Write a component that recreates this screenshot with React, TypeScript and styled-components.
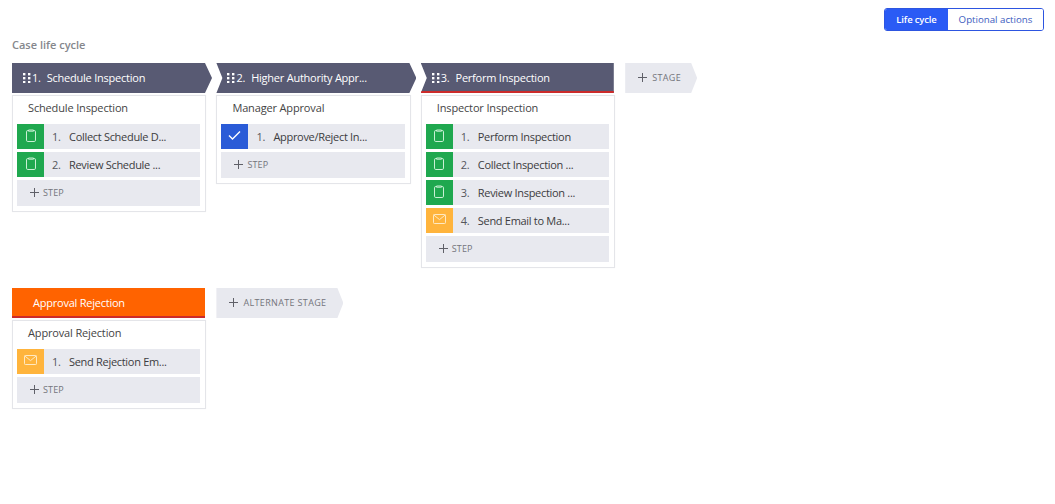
import React from "react";
import styled, { createGlobalStyle } from "styled-components";

const Global = createGlobalStyle`
  html, body { margin: 0; padding: 0; background: #fff; }
  body { font-family: "Open Sans", "Liberation Sans", sans-serif; color: #333; }
`;

const Page = styled.div`
  width: 1055px;
  height: 504px;
  box-sizing: border-box;
  padding: 8px 11px 0 12px;
  overflow: hidden;
`;
const TopBar = styled.div`
  display: flex;
  justify-content: flex-end;
  height: 23px;
`;
const Toggle = styled.div`
  display: flex;
  width: 160px;
  height: 23px;
  box-sizing: border-box;
  border: 1px solid #2d55e0;
  border-radius: 3px;
  overflow: hidden;
`;
const ToggleOption = styled.div<{ $active?: boolean }>`
  display: flex;
  align-items: center;
  justify-content: center;
  flex: ${(p) => (p.$active ? "0 0 63px" : "1")};
  font-size: ${(p) => (p.$active ? "9.5px" : "9.7px")};
  letter-spacing: ${(p) => (p.$active ? "-0.15px" : "0")};
  font-weight: ${(p) => (p.$active ? 600 : 400)};
  color: ${(p) => (p.$active ? "#fff" : "#3b5bc0")};
  background: ${(p) => (p.$active ? "#2a5bf5" : "#fff")};
`;
const Title = styled.h1`
  margin: 6px 0 10px;
  height: 16px;
  line-height: 16px;
  font-size: 11px;
  font-weight: 600;
  color: #85878c;
`;
const Row = styled.div`
  display: flex;
  align-items: flex-start;
  gap: 10px;
  margin-bottom: 20px;
`;
const Column = styled.div`
  flex: 0 0 194.4px;
  display: flex;
  flex-direction: column;
  gap: 2px;
`;
const Header = styled.div<{ $tone: "dark" | "orange"; $notch?: boolean; $point?: boolean; $red?: boolean }>`
  box-sizing: border-box;
  height: 30px;
  width: ${(p) => (p.$point ? "200px" : "193px")};
  margin-right: ${(p) => (p.$point ? "-6px" : "0")};
  display: flex;
  align-items: center;
  padding-left: 10px;
  padding-bottom: ${(p) => (p.$red ? "0" : "1px")};
  padding-top: ${(p) => (p.$red ? "1px" : "0")};
  background: ${(p) => (p.$tone === "orange" ? "#ff6300" : "#585a73")};
  border-bottom: ${(p) => (p.$red ? "2px solid #cc2b2b" : "0")};
  color: #fff;
  font-size: 11px;
  letter-spacing: -0.23px;
  white-space: nowrap;
  clip-path: polygon(
    0 0,
    ${(p) => (p.$point ? "calc(100% - 7px) 0, 100% 50%, calc(100% - 7px) 100%" : "100% 0, 100% 100%")},
    0 100%
    ${(p) => (p.$notch ? ", 6px 50%" : "")}
  );
`;
const Grip = styled.svg`
  flex: none;
  width: 10px;
  height: 10px;
  fill: #fff;
`;
const StageNumber = styled.span`
  margin-right: 6px;
`;
const OrangeName = styled.span`
  padding-left: 11px;
`;
const Card = styled.div`
  box-sizing: border-box;
  border: 1px solid #e4e5e9;
  padding: 0 5px 5px 4px;
  display: flex;
  flex-direction: column;
  gap: 3px;
  box-shadow: 0 0 1px rgba(0, 0, 0, 0.06);
`;
const CardTitle = styled.div`
  height: 25px;
  padding: 0 0 0 11px;
  box-sizing: border-box;
  line-height: 24px;
  font-size: 11px;
  letter-spacing: -0.15px;
  color: #444;
`;
const Step = styled.div`
  display: flex;
  align-items: center;
  height: 25px;
  background: #e8e9ef;
  font-size: 11px;
  letter-spacing: -0.3px;
  color: #3c3c40;
`;
const Tile = styled.div<{ $color: string }>`
  flex: 0 0 27px;
  align-self: stretch;
  display: flex;
  justify-content: center;
  padding-top: 5px;
  box-sizing: border-box;
  background: ${(p) => p.$color};
`;
const StepNumber = styled.span`
  flex: 0 0 17px;
  margin-left: 8px;
  color: #55565c;
`;
const StepName = styled.span`
  white-space: nowrap;
`;
const AddStep = styled.div`
  display: flex;
  align-items: center;
  gap: 3px;
  box-sizing: border-box;
  height: 26px;
  padding: 0 0 2px 12px;
  background: #e8e9ef;
  font-size: 9px;
  color: #74757c;
  letter-spacing: 0.15px;
`;
const AddStage = styled.div<{ $width: number }>`
  display: flex;
  align-items: center;
  gap: 4px;
  box-sizing: border-box;
  width: ${(p) => p.$width}px;
  height: 30px;
  padding: 0 0 2px 12px;
  background: #e8e9ef;
  font-size: 9px;
  letter-spacing: 0.35px;
  color: #74757c;
  clip-path: polygon(0 0, calc(100% - 6px) 0, 100% 50%, calc(100% - 6px) 100%, 0 100%);
`;

const GripIcon = () => (
  <Grip viewBox="0 0 10 10">
    {[0, 4, 8].flatMap((y) =>
      [1, 6].map((x) => <rect key={`${x}-${y}`} x={x} y={y} width="2.4" height="2.4" />)
    )}
  </Grip>
);
const Plus = () => (
  <svg width="11" height="11" viewBox="0 0 11 11" fill="none" stroke="#5f6068" strokeWidth="1">
    <path d="M5.5 1v9M1 5.5h9" />
  </svg>
);
const Clipboard = () => (
  <svg width="10" height="14" viewBox="0 0 10 14" fill="none" stroke="#c9f0d5" strokeWidth="1">
    <path d="M2.5 1.5H1.8A1.3 1.3 0 0 0 .5 2.8v8.4a1.3 1.3 0 0 0 1.3 1.3h6.4a1.3 1.3 0 0 0 1.3-1.3V2.8a1.3 1.3 0 0 0-1.3-1.3H7.5" />
    <path d="M2.5 1h5v1.2h-5z" />
  </svg>
);
const Mail = () => (
  <svg width="13" height="11" viewBox="0 0 13 11" fill="none" stroke="#ffe9c2" strokeWidth="1" style={{ marginTop: 1 }}>
    <rect x=".5" y=".5" width="12" height="9" rx=".8" />
    <path d="M.8 1l5.7 4.6L12.2 1" />
  </svg>
);
const Check = () => (
  <svg width="13" height="11" viewBox="0 0 13 11" fill="none" stroke="#fff" strokeWidth="1.4" style={{ marginTop: 1 }}>
    <path d="M1 5.6l3.5 3.4L12 1.5" />
  </svg>
);

type Kind = "green" | "blue" | "amber";
const tiles: Record<Kind, { color: string; icon: React.ReactNode }> = {
  green: { color: "#1fa84f", icon: <Clipboard /> },
  blue: { color: "#2a5bd7", icon: <Check /> },
  amber: { color: "#ffb43c", icon: <Mail /> },
};

type StepData = { kind: Kind; name: string };

const StepList = ({ title, steps }: { title: string; steps: StepData[] }) => (
  <Card>
    <CardTitle>{title}</CardTitle>
    {steps.map((s, i) => (
      <Step key={s.name}>
        <Tile $color={tiles[s.kind].color}>{tiles[s.kind].icon}</Tile>
        <StepNumber>{i + 1}.</StepNumber>
        <StepName>{s.name}</StepName>
      </Step>
    ))}
    <AddStep>
      <Plus />
      STEP
    </AddStep>
  </Card>
);

export default function App() {
  return (
    <Page>
      <Global />
      <TopBar>
        <Toggle>
          <ToggleOption $active>Life cycle</ToggleOption>
          <ToggleOption>Optional actions</ToggleOption>
        </Toggle>
      </TopBar>
      <Title>Case life cycle</Title>
      <Row>
        <Column>
          <Header $tone="dark" $point>
            <GripIcon />
            <StageNumber>1.</StageNumber>
            Schedule Inspection
          </Header>
          <StepList
            title="Schedule Inspection"
            steps={[
              { kind: "green", name: "Collect Schedule D..." },
              { kind: "green", name: "Review Schedule ..." },
            ]}
          />
        </Column>
        <Column>
          <Header $tone="dark" $point $notch>
            <GripIcon />
            <StageNumber>2.</StageNumber>
            Higher Authority Appr...
          </Header>
          <StepList title="Manager Approval" steps={[{ kind: "blue", name: "Approve/Reject In..." }]} />
        </Column>
        <Column>
          <Header $tone="dark" $notch $red>
            <GripIcon />
            <StageNumber>3.</StageNumber>
            Perform Inspection
          </Header>
          <StepList
            title="Inspector Inspection"
            steps={[
              { kind: "green", name: "Perform Inspection" },
              { kind: "green", name: "Collect Inspection ..." },
              { kind: "green", name: "Review Inspection ..." },
              { kind: "amber", name: "Send Email to Ma..." },
            ]}
          />
        </Column>
        <AddStage $width={72}>
          <Plus />
          STAGE
        </AddStage>
      </Row>
      <Row>
        <Column>
          <Header $tone="orange" $red>
            <OrangeName>Approval Rejection</OrangeName>
          </Header>
          <StepList title="Approval Rejection" steps={[{ kind: "amber", name: "Send Rejection Em..." }]} />
        </Column>
        <AddStage $width={127}>
          <Plus />
          ALTERNATE STAGE
        </AddStage>
      </Row>
    </Page>
  );
}
